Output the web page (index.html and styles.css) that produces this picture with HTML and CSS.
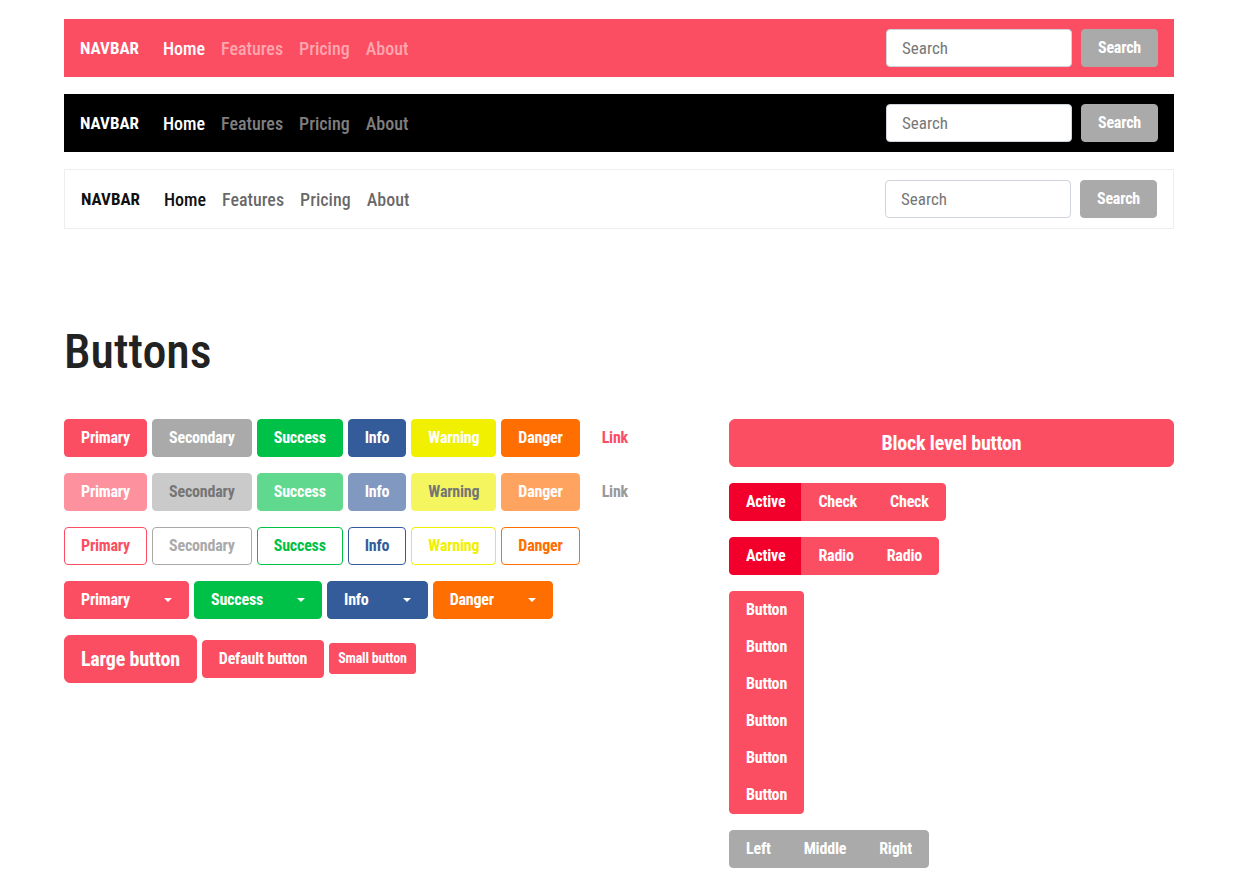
FILE: index.html
```html
<!DOCTYPE html>
<html>

<head>
    <meta charset="UTF-8">
    <title>Buttons</title>
    <link rel="stylesheet" href="styles.css">
</head>

<body>
    <div class="page">

        <nav class="navbar navbar-primary">
            <span class="brand">NAVBAR</span>
            <a class="nav-link active">Home</a>
            <a class="nav-link">Features</a>
            <a class="nav-link">Pricing</a>
            <a class="nav-link">About</a>
            <form class="search">
                <input class="search-input" type="text" placeholder="Search">
                <button class="btn btn-secondary" type="button">Search</button>
            </form>
        </nav>

        <nav class="navbar navbar-dark">
            <span class="brand">NAVBAR</span>
            <a class="nav-link active">Home</a>
            <a class="nav-link">Features</a>
            <a class="nav-link">Pricing</a>
            <a class="nav-link">About</a>
            <form class="search">
                <input class="search-input" type="text" placeholder="Search">
                <button class="btn btn-secondary" type="button">Search</button>
            </form>
        </nav>

        <nav class="navbar navbar-light">
            <span class="brand">NAVBAR</span>
            <a class="nav-link active">Home</a>
            <a class="nav-link">Features</a>
            <a class="nav-link">Pricing</a>
            <a class="nav-link">About</a>
            <form class="search">
                <input class="search-input" type="text" placeholder="Search">
                <button class="btn btn-secondary" type="button">Search</button>
            </form>
        </nav>

        <h1 class="title">Buttons</h1>

        <div class="row">
            <div class="col-left">
                <div class="btn-row">
                    <button class="btn btn-primary">Primary</button>
                    <button class="btn btn-secondary">Secondary</button>
                    <button class="btn btn-success">Success</button>
                    <button class="btn btn-info">Info</button>
                    <button class="btn btn-warning">Warning</button>
                    <button class="btn btn-danger">Danger</button>
                    <button class="btn btn-link">Link</button>
                </div>

                <div class="btn-row disabled">
                    <button class="btn btn-primary">Primary</button>
                    <button class="btn btn-secondary">Secondary</button>
                    <button class="btn btn-success">Success</button>
                    <button class="btn btn-info">Info</button>
                    <button class="btn btn-warning">Warning</button>
                    <button class="btn btn-danger">Danger</button>
                    <button class="btn btn-link">Link</button>
                </div>

                <div class="btn-row">
                    <button class="btn btn-outline-primary">Primary</button>
                    <button class="btn btn-outline-secondary">Secondary</button>
                    <button class="btn btn-outline-success">Success</button>
                    <button class="btn btn-outline-info">Info</button>
                    <button class="btn btn-outline-warning">Warning</button>
                    <button class="btn btn-outline-danger">Danger</button>
                </div>

                <div class="btn-row">
                    <button class="btn btn-primary dropdown-toggle">Primary</button>
                    <button class="btn btn-success dropdown-toggle">Success</button>
                    <button class="btn btn-info dropdown-toggle">Info</button>
                    <button class="btn btn-danger dropdown-toggle">Danger</button>
                </div>

                <div class="btn-row">
                    <button class="btn btn-primary btn-lg">Large button</button>
                    <button class="btn btn-primary">Default button</button>
                    <button class="btn btn-primary btn-sm">Small button</button>
                </div>
            </div>

            <div class="col-right">
                <button class="btn btn-primary btn-lg btn-block">Block level button</button>

                <div class="btn-group">
                    <button class="btn btn-primary active">Active</button>
                    <button class="btn btn-primary">Check</button>
                    <button class="btn btn-primary">Check</button>
                </div>

                <div class="btn-group">
                    <button class="btn btn-primary active">Active</button>
                    <button class="btn btn-primary">Radio</button>
                    <button class="btn btn-primary">Radio</button>
                </div>

                <div class="btn-group vertical">
                    <button class="btn btn-primary">Button</button>
                    <button class="btn btn-primary">Button</button>
                    <button class="btn btn-primary">Button</button>
                    <button class="btn btn-primary">Button</button>
                    <button class="btn btn-primary">Button</button>
                    <button class="btn btn-primary">Button</button>
                </div>

                <div class="btn-group">
                    <button class="btn btn-secondary">Left</button>
                    <button class="btn btn-secondary">Middle</button>
                    <button class="btn btn-secondary">Right</button>
                </div>
            </div>
        </div>

    </div>
</body>

</html>
```

FILE: styles.css
```css
/* Roboto com wdth reduzido no lugar da fonte condensada do tema */
html,
body {
    margin: 0;
    background: #fff;
    font-family: Roboto, "Liberation Sans", sans-serif;
    font-stretch: 75%;
    font-size: 16px;
    color: #222;
}

.page {
    width: 1110px;
    margin-left: 64px;
    padding-top: 19px;
}

/* Navbars */

.navbar {
    display: flex;
    align-items: center;
    height: 58px;
    padding: 0 16px;
    margin-bottom: 17px;
}

.navbar-primary {
    background: #fc4e62;
}

.navbar-dark {
    background: #000;
}

.navbar-light {
    background: #fff;
    border: 1px solid #eee;
}

.brand {
    font-size: 17px;
    font-weight: bold;
    margin-right: 16px;
    color: #fff;
}

.nav-link {
    font-size: 18px;
    font-weight: 500;
    padding: 0 8px;
    color: rgba(255, 255, 255, .5);
}

.nav-link.active {
    color: #fff;
}

.navbar-light .brand,
.navbar-light .nav-link.active {
    color: #111;
}

.navbar-light .nav-link {
    color: rgba(0, 0, 0, .6);
}

.search {
    display: flex;
    gap: 9px;
    margin: 0 0 0 auto;
}

.search-input {
    width: 186px;
    height: 38px;
    box-sizing: border-box;
    padding: 0 15px;
    border: 1px solid #ced4da;
    border-radius: 4px;
    font-family: inherit;
    font-stretch: inherit;
    font-size: 17px;
    color: #444;
}

.search-input::placeholder {
    color: #777;
}

/* Titulo */

.title {
    font-size: 48px;
    line-height: 1.2;
    font-weight: 500;
    margin: 94px 0 38px;
    color: #222;
}

/* Colunas - 7 / 5 */

.row {
    display: flex;
    gap: 30px;
}

.col-left {
    width: 635px;
}

.col-right {
    width: 445px;
    display: flex;
    flex-direction: column;
    align-items: flex-start;
    gap: 16px;
}

.btn-row {
    display: flex;
    align-items: center;
    gap: 5px;
    margin-bottom: 16px;
}

/* Botoes */

.btn {
    font-family: inherit;
    font-stretch: inherit;
    font-size: 16px;
    font-weight: bold;
    line-height: 24px;
    letter-spacing: -0.2px;
    padding: 6px 16px;
    border: 1px solid transparent;
    border-radius: 4px;
    color: #fff;
    background: transparent;
    cursor: pointer;
}

.btn-primary { background: #fc4e62; border-color: #fc4e62; }
.btn-secondary { background: #aaa; border-color: #aaa; }
.btn-success { background: #00c148; border-color: #00c148; }
.btn-info { background: #355c9a; border-color: #355c9a; }
.btn-warning { background: #f0f000; border-color: #f0f000; }
.btn-danger { background: #ff6e00; border-color: #ff6e00; }
.btn-link { color: #fc4e62; }

.btn-primary.active {
    background: #f2002b;
    border-color: #f2002b;
}

.disabled .btn {
    opacity: .62;
}

.disabled .btn-secondary,
.disabled .btn-warning {
    color: #222;
}

.disabled .btn-link {
    color: #999;
    opacity: 1;
}

.btn-outline-primary { color: #fc4e62; border-color: #fc4e62; }
.btn-outline-secondary { color: #aaa; border-color: #aaa; }
.btn-outline-success { color: #00c148; border-color: #00c148; }
.btn-outline-info { color: #355c9a; border-color: #355c9a; }
.btn-outline-warning { color: #f0f000; border-color: #f0f000; }
.btn-outline-danger { color: #ff6e00; border-color: #ff6e00; }

/* setinha do dropdown */
.dropdown-toggle::after {
    content: "";
    display: inline-block;
    margin-left: 34px;
    vertical-align: 3px;
    border-top: 4px solid #fff;
    border-left: 4px solid transparent;
    border-right: 4px solid transparent;
}

.btn-lg {
    font-size: 20px;
    line-height: 30px;
    padding: 8px 16px;
    border-radius: 6px;
}

.btn-sm {
    font-size: 14px;
    line-height: 21px;
    padding: 4px 8px;
    border-radius: 3px;
}

.btn-block {
    width: 100%;
}

/* Grupos */

.btn-group {
    display: inline-flex;
}

.btn-group .btn {
    border-radius: 0;
}

.btn-group .btn + .btn {
    margin-left: -1px;
}

.btn-group .btn:first-child {
    border-radius: 4px 0 0 4px;
}

.btn-group .btn:last-child {
    border-radius: 0 4px 4px 0;
}

.btn-group.vertical {
    flex-direction: column;
}

.btn-group.vertical .btn + .btn {
    margin-left: 0;
    margin-top: -1px;
}

.btn-group.vertical .btn:first-child {
    border-radius: 4px 4px 0 0;
}

.btn-group.vertical .btn:last-child {
    border-radius: 0 0 4px 4px;
}
```
